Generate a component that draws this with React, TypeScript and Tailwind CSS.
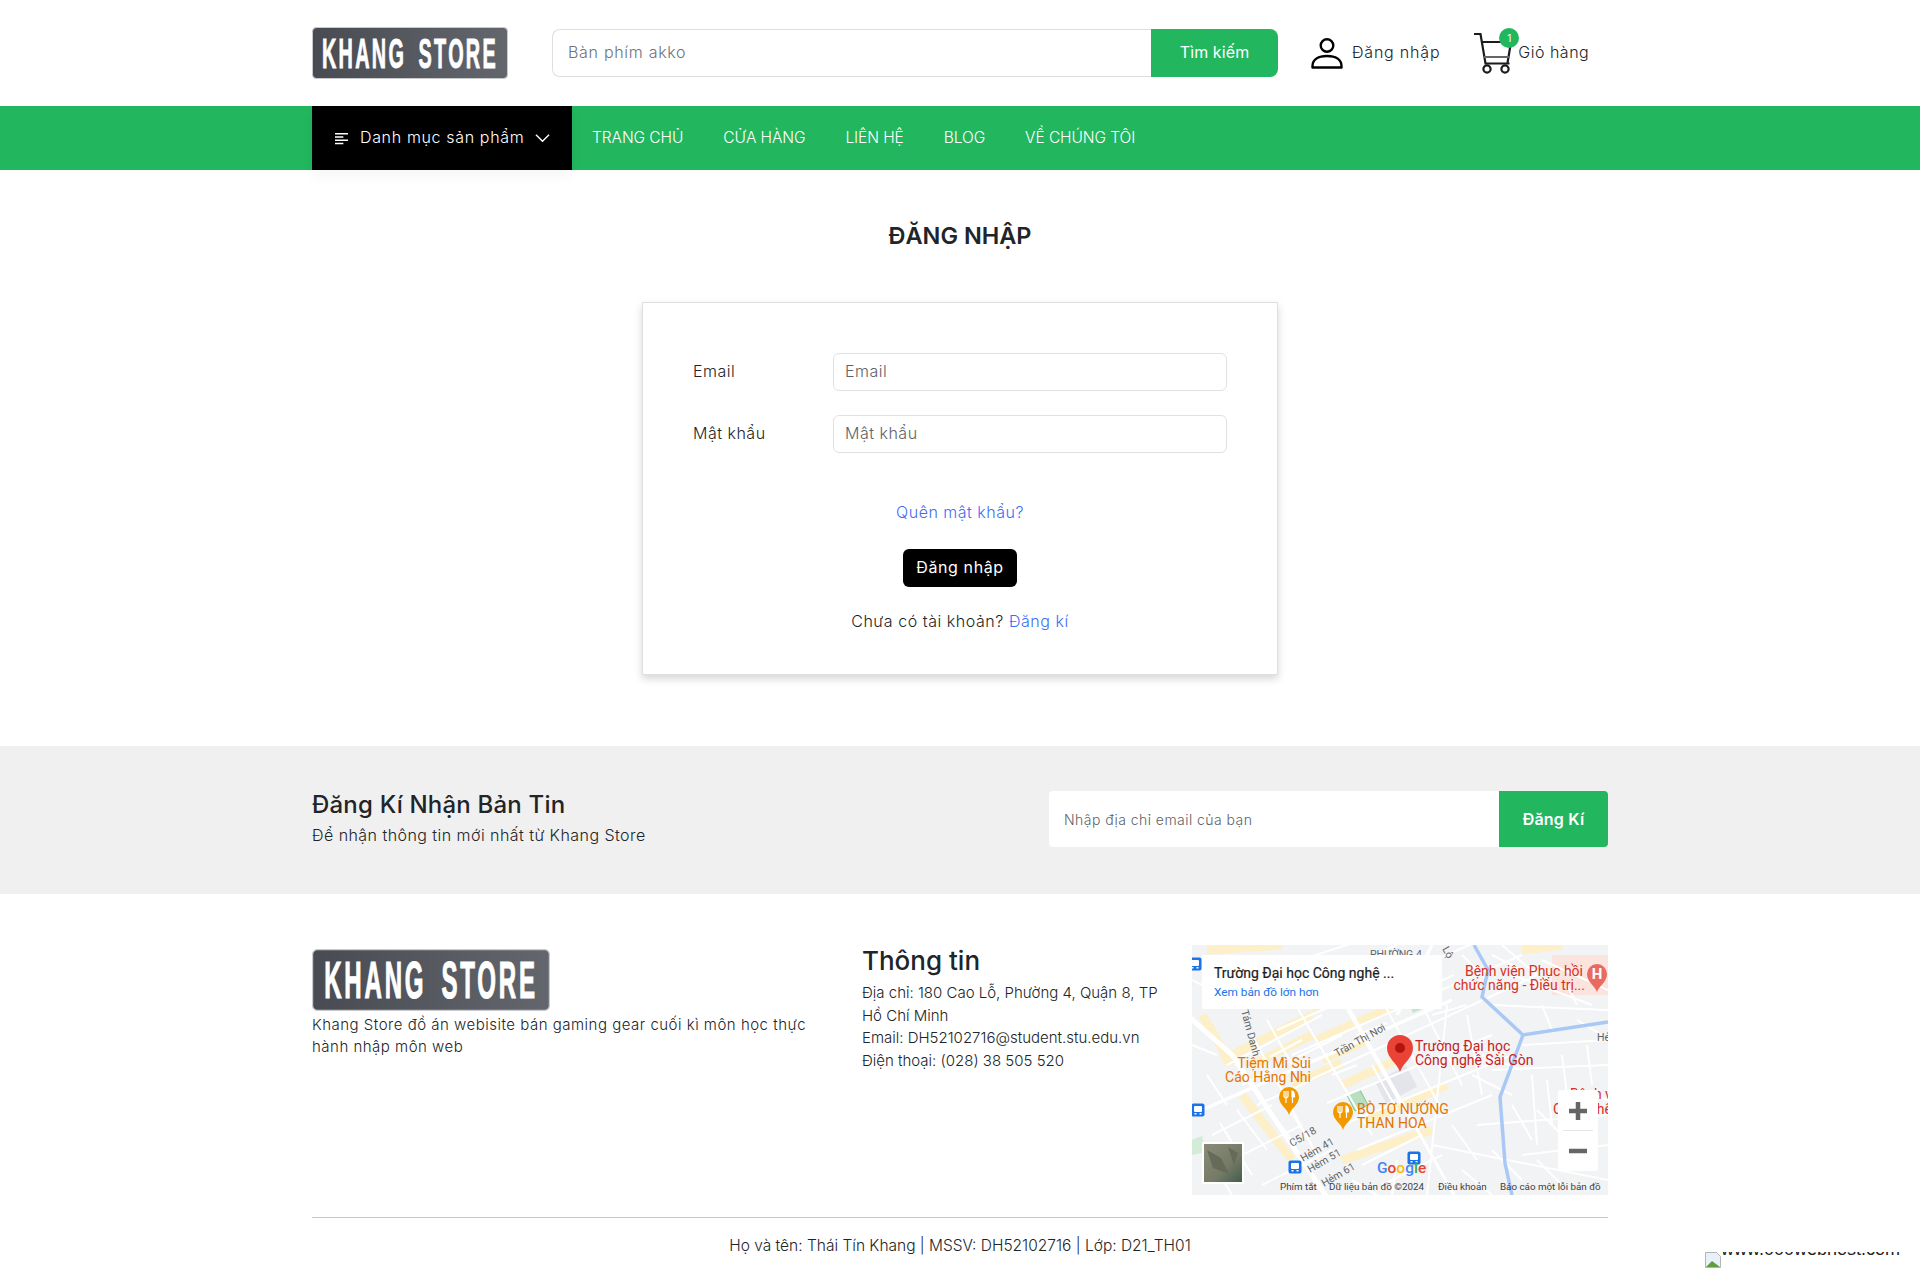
import React from 'react'

const navLinks = ['TRANG CHỦ', 'CỬA HÀNG', 'LIÊN HỆ', 'BLOG', 'VỀ CHÚNG TÔI']

function Logo({ className, id }: { className: string; id: string }) {
  return (
    <svg viewBox="0 0 196 52" preserveAspectRatio="none" className={className}>
      <defs>
        <linearGradient id={id} x1="0" x2="1" y1="0" y2="0">
          <stop offset="0" stopColor="#484b52" />
          <stop offset="1" stopColor="#63666d" />
        </linearGradient>
      </defs>
      <rect x="0.5" y="0.5" width="195" height="51" rx="4" fill={`url(#${id})`} stroke="#c9cacc" />
      <text
        x="10"
        y="41"
        fontFamily="Liberation Sans"
        fontWeight="700"
        fontSize="43"
        fill="#fff"
        stroke="#fff"
        strokeWidth="1"
        letterSpacing="5"
        wordSpacing="10"
        textLength="176"
        lengthAdjust="spacingAndGlyphs"
      >
        KHANG STORE
      </text>
    </svg>
  )
}

function UserIcon() {
  return (
    <svg viewBox="0 0 32 32" fill="none" stroke="#000" strokeWidth="2.4" className="h-[32px] w-[32px]">
      <circle cx="16" cy="8.5" r="6.3" />
      <path d="M1.5 30.5v-1.5c0-6.5 6-10 14.500-10s14.500 3.500 14.500 10v1.500z" strokeLinejoin="round" />
    </svg>
  )
}

function CartIcon() {
  return (
    <svg viewBox="0 0 40 42" fill="none" stroke="#1b1b1f" className="h-[42px] w-[40px]">
      <path d="M1 2h6.500l5 29.500h24" strokeWidth="2.200" />
      <path d="M8.500 10h29.500l-3.500 21" strokeWidth="2.200" />
      <path d="M11 25h25" strokeWidth="2" stroke="#666" />
      <circle cx="14" cy="37" r="3.600" strokeWidth="2.200" />
      <circle cx="32" cy="37" r="3.600" strokeWidth="2.200" />
    </svg>
  )
}

function BusMark({ x, y }: { x: number; y: number }) {
  return (
    <g transform={`translate(${x} ${y})`}>
      <rect x="-6.500" y="-6.500" width="13" height="13" rx="2" fill="#1a73e8" />
      <rect x="-4" y="-4" width="8" height="6" rx="1" fill="#fff" />
      <rect x="-3.500" y="3" width="2" height="1.500" fill="#fff" />
      <rect x="1.500" y="3" width="2" height="1.500" fill="#fff" />
    </g>
  )
}

function FoodPin({ x, y }: { x: number; y: number }) {
  return (
    <g transform={`translate(${x} ${y})`}>
      <path d="M0 18c-2-7-10-10-10-18a10 10 0 0 1 20 0c0 8-8 11-10 18z" fill="#f29900" />
      <path d="M-5-6v5a2 2 0 0 0 4 0v-5M-3-6v12" stroke="#fff" strokeWidth="1.200" fill="none" />
      <path d="M3-6c2 0 2.500 3 2.500 6h-2.500zM3.500 0v6" stroke="#fff" strokeWidth="1.200" fill="#fff" />
    </g>
  )
}

// street layout, roughly traced off the reference
const minorRoads = [
  'M60 30L250 -30', 'M70 62L290 -40', 'M85 85L300 -10', 'M100 110L330 10', 'M118 135L345 30',
  'M135 158L300 90', 'M150 180L320 110', 'M165 205L300 150', 'M35 120L130 70', 'M50 140L150 90',
  'M65 160L120 135', 'M20 190L80 160', 'M40 215L110 180', 'M70 240L140 205',
  'M130 20L215 170', 'M165 10L250 165', 'M200 0L270 140', 'M95 45L180 190', 'M60 90L130 220',
  'M255 60L235 250', 'M275 70L290 150', 'M285 180L416 170', 'M300 125L416 120', 'M330 100L416 95',
  'M340 130L345 200', 'M370 110L375 150', 'M395 100L400 140', 'M330 210L416 200', 'M240 200L416 235',
  'M270 10L300 40', 'M300 60L416 65', 'M320 30L400 60', 'M350 15L416 45', 'M170 220L230 190',
  'M190 240L250 210', 'M0 35L50 60', 'M0 100L25 110', 'M310 0L345 30', 'M345 165L375 195',
  'M105 60L150 40', 'M78 112L110 95', 'M75 75L100 120', 'M45 165L75 205', 'M28 178L60 230',
  'M10 200L40 250', 'M85 175L100 195', 'M100 168L120 200', 'M140 130L165 120', 'M165 90L195 78',
  'M180 120L205 165', 'M240 70L275 60', 'M290 110L330 125', 'M280 130L320 150', 'M355 135L360 180',
  'M320 160L340 195', 'M300 205L330 235', 'M345 215L370 240', 'M260 180L285 215', 'M270 225L300 250',
  'M385 75L410 90', 'M350 60L360 85', 'M375 40L385 60', 'M400 150L416 155', 'M205 215L200 250',
  'M240 40L262 30', 'M300 10L330 25', 'M160 235L185 250', 'M15 130L35 160',
]
const yellowBlocks = [
  'M30 115L120 70', 'M120 65L230 20', 'M125 95L240 45', 'M150 140L205 115', 'M175 175L255 140',
  'M10 70L40 120', 'M50 150L100 215', 'M150 215L240 185', 'M15 5L90 0', 'M330 5L370 0',
  'M60 120L120 90', 'M70 55L110 35', 'M130 115L175 95', 'M100 140L150 118',
]

function MapBox() {
  return (
    <svg viewBox="0 0 416 250" className="h-[250px] w-[416px] shrink-0 font-['Roboto',sans-serif]">
      <defs>
        <linearGradient id="satBg" x1="0" x2="1" y1="0" y2="1">
          <stop offset="0" stopColor="#8a8c78" />
          <stop offset="0.6" stopColor="#757a66" />
          <stop offset="1" stopColor="#3f5c4c" />
        </linearGradient>
        <clipPath id="mapClip">
          <rect width="416" height="250" />
        </clipPath>
      </defs>
      <g clipPath="url(#mapClip)">
        <rect width="416" height="250" fill="#f1f3f4" />
        <rect x="360" y="10" width="56" height="40" fill="#fbe3de" />
        <g stroke="#fdf0c8" strokeWidth="9" fill="none">
          {yellowBlocks.map((d) => (
            <path key={d} d={d} />
          ))}
        </g>
        <rect x="187" y="127" width="35" height="24" fill="#e3e5ea" transform="rotate(-28 205 140)" />
        <path d="M155 150l13-5 8 15-13 6z" fill="#b9dfc0" stroke="#7cc48b" />
        <path d="M218 60l26-12 3 8-26 12z" fill="#c4e5cb" />
        <path d="M0 195l10-4 4 16-14 3z" fill="#d3ecd8" />
        <g stroke="#fff" strokeWidth="2" fill="none">
          {minorRoads.map((d) => (
            <path key={d} d={d} />
          ))}
        </g>
        <path d="M-5 70L40 110L140 260" stroke="#fff" strokeWidth="5" fill="none" />
        <path d="M10 165L260 55" stroke="#fff" strokeWidth="3.500" fill="none" />
        <path d="M155 60L262 250" stroke="#fff" strokeWidth="3" fill="none" />
        <path d="M240 0L205 70" stroke="#fff" strokeWidth="3.500" fill="none" />
        <path
          d="M416 77L331 90L308 152L313 218L320 250M331 90L290 52L296 25L282 0"
          stroke="#a9c8f5"
          strokeWidth="3.500"
          fill="none"
        />
        <g fill="#5f6368" fontSize="10.500">
          <text transform="translate(145 112) rotate(-29)">Trần Thị Nơi</text>
          <text transform="translate(49 66) rotate(75)">Tám Danh</text>
          <text transform="translate(100 202) rotate(-30)">C5/18</text>
          <text transform="translate(111 217) rotate(-30)">Hẻm 41</text>
          <text transform="translate(118 228) rotate(-30)">Hẻm 51</text>
          <text transform="translate(132 242) rotate(-30)">Hẻm 61</text>
          <text x="178" y="13">PHƯỜNG 4</text>
          <text transform="translate(250 4) rotate(60)">Lộ</text>
          <text x="405" y="96">Hẻ</text>
        </g>
        <g fontSize="14" fill="#c5221f">
          <text x="223" y="106">Trường Đại học</text>
          <text x="223" y="120">Công nghệ Sài Gòn</text>
        </g>
        <g fontSize="14" fill="#d93025" textAnchor="end">
          <text x="391" y="31">Bệnh viện Phục hồi</text>
          <text x="393" y="45">chức năng - Điều trị...</text>
        </g>
        <g fontSize="14" fill="#d93025">
          <text x="378" y="154">Bệnh viện</text>
          <text x="361" y="169">Cơ sở thế</text>
        </g>
        <g fontSize="14" fill="#e37400">
          <text x="119" y="123" textAnchor="end">Tiệm Mì Sủi</text>
          <text x="119" y="137" textAnchor="end">Cáo Hằng Nhi</text>
          <text x="165" y="169">BÒ TƠ NƯỚNG</text>
          <text x="165" y="183">THAN HOA</text>
        </g>
        <FoodPin x={97} y={152} />
        <FoodPin x={151} y={167} />
        <path d="M405 47c-2-6-10-10-10-18a10 10 0 0 1 20 0c0 8-8 12-10 18z" fill="#ea6a5f" />
        <text x="405" y="34" textAnchor="middle" fontSize="15" fontWeight="700" fill="#fff">
          H
        </text>
        <path d="M208 127c-3-9-13-14-13-24a13 13 0 0 1 26 0c0 10-10 15-13 24z" fill="#ea4335" />
        <circle cx="208" cy="103" r="5" fill="#b31412" />
        <BusMark x={3} y={19} />
        <BusMark x={6} y={165} />
        <BusMark x={103} y={222} />
        <BusMark x={222} y={213} />
        <rect x="10" y="10" width="240" height="54" rx="2" fill="#fff" />
        <text x="22" y="33" fontSize="14" fill="#202124" stroke="#202124" strokeWidth="0.2">
          Trường Đại học Công nghệ ...
        </text>
        <text x="22" y="51" fontSize="11.800" fill="#1a73e8">
          Xem bản đồ lớn hơn
        </text>
        <rect x="366" y="145" width="40" height="81" rx="2" fill="#fff" />
        <rect x="371" y="185" width="30" height="1" fill="#e6e6e6" />
        <path d="M386 157v18M377 166h18" stroke="#666" strokeWidth="4.500" />
        <path d="M377 206h18" stroke="#666" strokeWidth="4.500" />
        <rect x="11" y="198" width="40" height="40" fill="url(#satBg)" stroke="#fff" strokeWidth="2" />
        <path d="M15 205l14 8 8 16-16-6zM36 202l10 6-4 12z" fill="#666a58" />
        <text x="185" y="228" fontSize="15.500" fontWeight="500">
          <tspan fill="#4285f4">G</tspan>
          <tspan fill="#ea4335">o</tspan>
          <tspan fill="#fbbc04">o</tspan>
          <tspan fill="#4285f4">g</tspan>
          <tspan fill="#34a853">l</tspan>
          <tspan fill="#ea4335">e</tspan>
        </text>
        <g fill="#3c4043" fontSize="9.800">
          <text x="88" y="245">Phím tắt</text>
          <text x="137" y="245">Dữ liệu bản đồ ©2024</text>
          <text x="246" y="245">Điều khoản</text>
          <text x="308" y="245">Báo cáo một lỗi bản đồ</text>
        </g>
      </g>
    </svg>
  )
}

export default function App() {
  return (
    <div className="relative h-[1269px] overflow-hidden bg-white font-['Inter',sans-serif] text-[#212529]">
      {/* Header */}
      <div className="mx-auto flex h-[106px] w-[1296px] items-center">
        <Logo id="logoTop" className="h-[52px] w-[196px] shrink-0" />
        <div className="ml-[44px] flex h-[48px] w-[726px]">
          <input
            placeholder="Bàn phím akko"
            className="min-w-0 flex-1 rounded-l-lg border border-r-0 border-[#dedede] px-[15px] pb-[2px] text-[16px] font-light tracking-[0.7px] outline-none placeholder:text-[#6c757d]"
          />
          <button className="w-[127px] rounded-r-lg bg-[#22b65e] pb-[2px] text-[16px] font-normal tracking-[0.1px] text-white">
            Tìm kiếm
          </button>
        </div>
        <div className="ml-[33px] flex items-center">
          <UserIcon />
          <span className="mb-[2px] ml-[9px] text-[16px] font-light tracking-[0.8px]">Đăng nhập</span>
        </div>
        <div className="relative ml-[33px] flex items-center">
          <CartIcon />
          <span className="absolute left-[26px] top-[-4px] flex h-[20px] w-[20px] items-center justify-center rounded-full bg-[#22b65e] text-[10px] text-white">
            1
          </span>
          <span className="mb-[2px] ml-[5px] text-[16px] font-light tracking-[0.5px]">Giỏ hàng</span>
        </div>
      </div>

      {/* Nav */}
      <div className="h-[64px] bg-[#22b65e]">
        <div className="mx-auto flex h-full w-[1296px] items-center">
          <div className="flex h-full w-[260px] items-center bg-black pl-[22px] text-white shadow-[0_6px_12px_rgba(0,0,0,0.04)]">
            <svg viewBox="0 0 16 14" className="h-[13px] w-[15px]" stroke="#fff" strokeWidth="1.600">
              <path d="M1 2h14M1 5.500h9M1 9h14M1 12.500h9" />
            </svg>
            <span className="mb-[2px] ml-[11px] text-[16px] font-light tracking-[0.65px]">Danh mục sản phẩm</span>
            <svg viewBox="0 0 16 10" className="ml-[11px] h-[10px] w-[15px]" fill="none" stroke="#fff" strokeWidth="1.500">
              <path d="M1 1.500l7 7 7-7" />
            </svg>
          </div>
          <div className="flex pl-[20px]">
            {navLinks.map((link) => (
              <a key={link} className="mr-[40px] text-[15.500px] font-light tracking-[-0.08px] text-white">
                {link}
              </a>
            ))}
          </div>
        </div>
      </div>

      {/* Login */}
      <div className="flex h-[576px] flex-col items-center">
        <h1 className="mt-[50px] text-[23.500px] leading-[31px] font-semibold text-[#212529]">ĐĂNG NHẬP</h1>
        <div className="mt-[51px] flex h-[373px] w-[636px] flex-col items-center border border-[#dfdfdf] px-[50px] pt-[50px] shadow-[0_4px_8px_rgba(0,0,0,0.16)]">
          <div className="flex h-[38px] w-full items-center">
            <label className="w-[140px] pb-[2px] text-[16px] font-light tracking-[0.5px]">Email</label>
            <input
              placeholder="Email"
              className="h-full flex-1 rounded-md border border-[#dee2e6] px-[11px] pb-[2px] text-[16px] font-light tracking-[0.5px] placeholder:text-[#5c636a]"
            />
          </div>
          <div className="mt-[24px] flex h-[38px] w-full items-center">
            <label className="w-[140px] pb-[2px] text-[16px] font-light tracking-[0.5px]">Mật khẩu</label>
            <input
              placeholder="Mật khẩu"
              className="h-full flex-1 rounded-md border border-[#dee2e6] px-[11px] pb-[2px] text-[16px] font-light tracking-[0.5px] placeholder:text-[#5c636a]"
            />
          </div>
          <a className="mt-[47px] text-[16px] leading-[24px] font-light tracking-[0.5px] text-[#3f6df5]">Quên mật khẩu?</a>
          <button className="mt-[25px] h-[38px] w-[114px] rounded-md bg-black pb-[2px] text-[16px] font-normal tracking-[0.6px] text-white">
            Đăng nhập
          </button>
          <p className="mt-[22px] text-[16px] leading-[24px] font-light tracking-[0.55px]">
            Chưa có tài khoản? <a className="text-[#3f6df5]">Đăng kí</a>
          </p>
        </div>
      </div>

      {/* Newsletter */}
      <div className="h-[148px] bg-[#f0f0f0]">
        <div className="mx-auto flex h-full w-[1296px] items-center justify-between">
          <div className="mb-[5px]">
            <h3 className="text-[24px] leading-[30px] font-medium tracking-[0.2px]">Đăng Kí Nhận Bản Tin</h3>
            <p className="mt-[3px] mb-[-2px] text-[16px] leading-[24px] font-light tracking-[0.45px]">
              Để nhận thông tin mới nhất từ Khang Store
            </p>
          </div>
          <div className="mb-[2px] flex h-[56px] w-[559px]">
            <input
              placeholder="Nhập địa chỉ email của bạn"
              className="min-w-0 flex-1 rounded-l-sm bg-white px-[15px] text-[14px] font-light tracking-[0.45px] placeholder:text-[#5c636a]"
            />
            <button className="w-[109px] rounded-r-sm bg-[#22b65e] text-[16px] font-semibold tracking-[0.2px] text-white">
              Đăng Kí
            </button>
          </div>
        </div>
      </div>

      {/* Footer */}
      <div className="mx-auto w-[1296px]">
        <div className="flex h-[324px] border-b border-[#c8c8c8] pt-[51px]">
          <div className="w-[550px] pt-[4px]">
            <Logo id="logoBottom" className="h-[62px] w-[238px]" />
            <p className="mt-[3px] w-[515px] text-[15px] leading-[22px] font-light tracking-[0.5px]">
              Khang Store đồ án webisite bán gaming gear cuối kì môn học thực hành nhập môn web
            </p>
          </div>
          <div className="w-[330px]">
            <h3 className="text-[26px] leading-[32px] font-medium">Thông tin</h3>
            <p className="mt-[5px] w-[305px] text-[15px] leading-[22.500px] font-light">
              Địa chỉ: 180 Cao Lỗ, Phường 4, Quận 8, TP Hồ Chí Minh
              <br />
              Email: DH52102716@student.stu.edu.vn
              <br />
              Điện thoại: (028) 38 505 520
            </p>
          </div>
          <MapBox />
        </div>
        <p className="mt-[16px] text-center text-[15.500px] leading-[24px] font-light">
          Họ và tên: Thái Tín Khang | MSSV: DH52102716 | Lớp: D21_TH01
        </p>
      </div>

      {/* Host banner, its image did not load */}
      <div className="absolute bottom-0 right-[20px] flex h-[17px] items-start overflow-hidden">
        <svg viewBox="0 0 16 16" className="h-[16px] w-[16px]">
          <path d="M0.500 0.500h11l4 4v11h-15z" fill="#e8f0fa" stroke="#b5b5b5" />
          <path d="M1 15l6-6 4 3 4 3z" fill="#5f9e3c" />
        </svg>
        <span className="mt-[-13px] font-['Liberation_Sans',sans-serif] text-[18px] leading-[20px] text-[#222]">
          www.000webhost.com
        </span>
      </div>
    </div>
  )
}
